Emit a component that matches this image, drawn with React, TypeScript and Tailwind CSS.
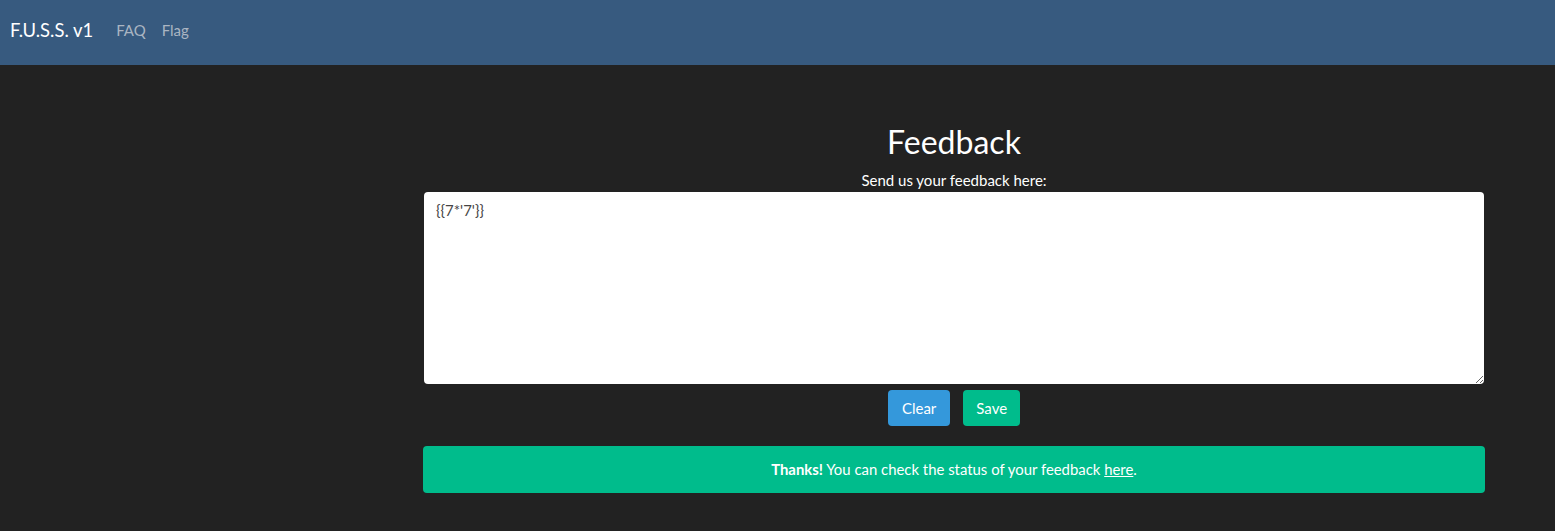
import React from 'react';

export default function App() {
  return (
    <div className="min-h-[531px] bg-[#222222] font-['Lato','Noto_Sans',sans-serif] text-[15px] text-white">
      <nav className="flex h-[65px] items-start bg-[#375a7f] pt-[19px]">
        <a href="#" className="ml-[10px] text-[18.4px] leading-[22px] text-white">
          F.U.S.S. v1
        </a>
        <a href="#" className="ml-[23px] pt-[1px] text-[15px] leading-[21px] text-[#aab5c2]">
          FAQ
        </a>
        <a href="#" className="ml-[16px] pt-[1px] text-[15px] leading-[21px] text-[#aab5c2]">
          Flag
        </a>
      </nav>
      <main className="ml-[423px] w-[1062px] pt-[59px]">
        <h1 className="text-center text-[32px] leading-[36px] font-normal">Feedback</h1>
        <p className="mt-[10px] text-center leading-[21px]">Send us your feedback here:</p>
        <div className="mt-[1px] px-[1px]">
          <textarea
            defaultValue={"{{7*'7'}}"}
            className="block h-[192px] w-full rounded-[4px] bg-white px-[12px] py-[8px] text-[15px] leading-[21px] text-[#464545] outline-none"
          />
        </div>
        <div className="mt-[6px] flex justify-center gap-[13px]">
          <button className="h-[36px] rounded-[4px] bg-[#3498db] px-[14px] text-white">Clear</button>
          <button className="h-[36px] rounded-[4px] bg-[#00bc8c] px-[13px] text-white">Save</button>
        </div>
        <div className="mt-[20px] flex h-[47px] items-center justify-center rounded-[4px] bg-[#00bc8c] text-white">
          <span className="text-[14.9px]">
            <strong className="font-bold">Thanks!</strong> You can check the status of your feedback{' '}
            <a href="#" className="underline">here</a>.
          </span>
        </div>
      </main>
    </div>
  );
}
